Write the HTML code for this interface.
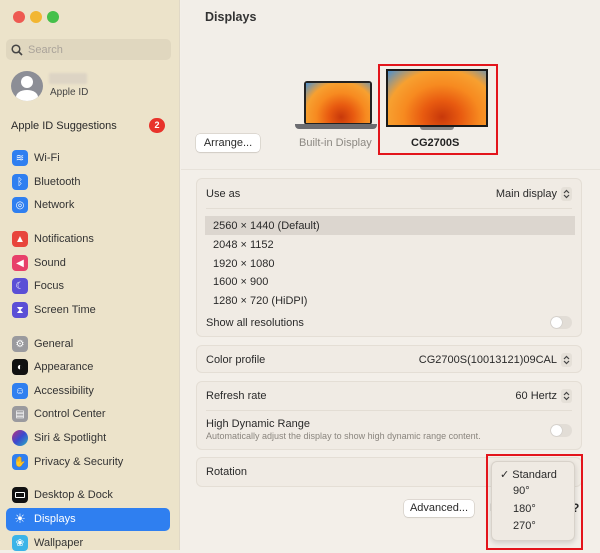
<!DOCTYPE html>
<html><head><meta charset="utf-8"><style>
*{margin:0;padding:0;box-sizing:border-box}
body{width:600px;height:550px;overflow:hidden;font-family:"Liberation Sans",sans-serif;font-size:11px;color:#2a2a2a;background:#f3efe9;position:relative}
.a{position:absolute}
#side{left:0;top:0;width:180px;height:550px;background:#ece3ca;border-right:1px solid #e0d8c6}
.dot{width:12px;height:12px;border-radius:50%;top:11px}
.it{position:absolute;left:12px;height:20px;display:flex;align-items:center;font-size:11px;color:#333}
.ic{width:16px;height:16px;border-radius:4px;margin-right:6px;flex:none;display:flex;align-items:center;justify-content:center;color:#fff;font-size:10px}
.panel{position:absolute;left:196px;width:386px;background:#f0ebe4;border:1px solid #e4ded5;border-radius:6px}
.row{position:absolute;left:9px;right:9px;display:flex;justify-content:space-between;align-items:center}
.sep{position:absolute;left:9px;right:9px;height:1px;background:#e3ddd4}
.tog{width:22px;height:13px;border-radius:7px;background:#e2ddd6;position:relative}
.tog:after{content:"";position:absolute;left:1px;top:1px;width:11px;height:11px;border-radius:50%;background:#fff;box-shadow:0 0 1px #999}
.st{display:inline-block;width:11px;height:14px;border-radius:3px;background:#e5e0d8;margin-left:4px;vertical-align:middle}
.wp{background:radial-gradient(ellipse at 55% 85%,#c8380a 0%,#e85a10 25%,#f78a20 50%,#f7a030 72%,#4a90d0 100%)}
.btn{position:absolute;background:#fff;border-radius:4px;box-shadow:0 0 0 .5px #c8c2ba,0 1px 1px rgba(0,0,0,.1);font-size:11px;text-align:center}
</style></head><body>
<div id="side" class="a">
 <div class="a dot" style="left:13px;background:#ee5a52"></div>
 <div class="a dot" style="left:30px;background:#f2b632"></div>
 <div class="a dot" style="left:47px;background:#45c04a"></div>
 <div class="a" style="left:6px;top:39px;width:165px;height:21px;border-radius:5px;background:#e0d7bf;color:#aaa39a;padding-left:22px;line-height:22px">Search</div>
 <svg class="a" style="left:11px;top:44px" width="12" height="12"><circle cx="5" cy="5" r="3.8" fill="none" stroke="#444" stroke-width="1.5"/><line x1="8" y1="8" x2="11" y2="11" stroke="#444" stroke-width="1.6"/></svg>
 <div class="a" style="left:11px;top:71px;width:32px;height:30px;border-radius:50%;background:#8c8e96;overflow:hidden"><div class="a" style="left:10px;top:5px;width:12px;height:12px;border-radius:50%;background:#fff"></div><div class="a" style="left:5px;top:19px;width:22px;height:14px;border-radius:50%;background:#fff"></div></div>
 <div class="a" style="left:49px;top:73px;width:38px;height:11px;background:#ddd4c4;border-radius:2px;filter:blur(1px)"></div>
 <div class="a" style="left:50px;top:87px;font-size:10px;color:#444">Apple ID</div>
 <div class="a" style="left:11px;top:120px;font-size:11px">Apple ID Suggestions</div>
 <div class="a" style="left:149px;top:118px;width:16px;height:15px;border-radius:8px;background:#e8332b;color:#fff;font-size:9px;font-weight:bold;text-align:center;line-height:15px">2</div>
 <div class="it" style="top:148px"><div class="ic" style="background:#2f7ff0">≋</div>Wi-Fi</div>
 <div class="it" style="top:172px"><div class="ic" style="background:#2f7ff0">ᛒ</div>Bluetooth</div>
 <div class="it" style="top:195px"><div class="ic" style="background:#2f7ff0">◎</div>Network</div>
 <div class="it" style="top:229px"><div class="ic" style="background:#e8453c">▲</div>Notifications</div>
 <div class="it" style="top:253px"><div class="ic" style="background:#e8406a">◀</div>Sound</div>
 <div class="it" style="top:276px"><div class="ic" style="background:#5b4fd6">☾</div>Focus</div>
 <div class="it" style="top:300px"><div class="ic" style="background:#5b4fd6">⧗</div>Screen Time</div>
 <div class="it" style="top:334px"><div class="ic" style="background:#9a9a9e">⚙</div>General</div>
 <div class="it" style="top:357px"><div class="ic" style="background:#111">◐</div>Appearance</div>
 <div class="it" style="top:381px"><div class="ic" style="background:#2f7ff0">☺</div>Accessibility</div>
 <div class="it" style="top:404px"><div class="ic" style="background:#9a9a9e">▤</div>Control Center</div>
 <div class="it" style="top:428px"><div class="ic" style="background:linear-gradient(135deg,#c0307a,#3a4ad0,#2ab0c0);border-radius:8px"></div>Siri &amp; Spotlight</div>
 <div class="it" style="top:452px"><div class="ic" style="background:#2f7ff0">✋</div>Privacy &amp; Security</div>
 <div class="it" style="top:485px"><div class="ic" style="background:#111"><div style="width:10px;height:6px;border:1.5px solid #fff;border-radius:1px"></div></div>Desktop &amp; Dock</div>
 <div class="a" style="left:6px;top:508px;width:164px;height:23px;border-radius:5px;background:#2f7ff0"></div>
 <div class="it" style="top:509px;color:#fff"><div class="ic" style="background:none;font-size:13px">☀</div>Displays</div>
 <div class="it" style="top:533px"><div class="ic" style="background:#3bb4e8">❀</div>Wallpaper</div>
</div>
<div class="a" style="left:181px;top:0;width:419px;height:170px;background:#f2eee8;border-bottom:1px solid #e7e2da"></div>
<div class="a" style="left:205px;top:10px;font-size:12.5px;font-weight:bold;color:#333">Displays</div>
<div class="a" style="left:304px;top:81px;width:68px;height:44px;background:#222;border-radius:3px;padding:2px"><div class="wp" style="width:100%;height:100%"></div></div>
<div class="a" style="left:295px;top:124px;width:82px;height:5px;background:#6c6c70;border-radius:0 0 4px 4px"></div>
<div class="a" style="left:386px;top:69px;width:102px;height:58px;background:#1a1a1a;padding:2px"><div class="wp" style="width:100%;height:100%"></div></div>
<div class="a" style="left:420px;top:127px;width:34px;height:3px;background:#888;border-radius:0 0 4px 4px"></div>
<div class="a" style="left:378px;top:64px;width:120px;height:91px;border:2px solid #e3141b"></div>
<div class="btn" style="left:196px;top:134px;width:64px;height:18px;line-height:18px">Arrange...</div>
<div class="a" style="left:299px;top:137px;color:#8c8882">Built-in Display</div>
<div class="a" style="left:411px;top:137px;font-weight:bold;color:#222">CG2700S</div>

<div class="panel" style="top:178px;height:159px">
 <div class="row" style="top:8px">Use as<span>Main display<svg class="st" viewBox="0 0 11 14"><path d="M3 6l2.5-2.5L8 6M3 8l2.5 2.5L8 8" fill="none" stroke="#444" stroke-width="1.2"/></svg></span></div>
 <div class="sep" style="top:29px"></div>
 <div class="a" style="left:8px;top:37px;width:370px;height:19px;background:#dcd6cf"></div>
 <div class="a" style="left:16px;top:41px">2560 × 1440 (Default)</div>
 <div class="a" style="left:16px;top:60px">2048 × 1152</div>
 <div class="a" style="left:16px;top:79px">1920 × 1080</div>
 <div class="a" style="left:16px;top:97px">1600 × 900</div>
 <div class="a" style="left:16px;top:116px">1280 × 720 (HiDPI)</div>
 <div class="row" style="top:137px">Show all resolutions<div class="tog"></div></div>
</div>
<div class="panel" style="top:345px;height:28px">
 <div class="row" style="top:7px">Color profile<span>CG2700S(10013121)09CAL<svg class="st" viewBox="0 0 11 14"><path d="M3 6l2.5-2.5L8 6M3 8l2.5 2.5L8 8" fill="none" stroke="#444" stroke-width="1.2"/></svg></span></div>
</div>
<div class="panel" style="top:381px;height:69px">
 <div class="row" style="top:7px">Refresh rate<span>60 Hertz<svg class="st" viewBox="0 0 11 14"><path d="M3 6l2.5-2.5L8 6M3 8l2.5 2.5L8 8" fill="none" stroke="#444" stroke-width="1.2"/></svg></span></div>
 <div class="sep" style="top:28px"></div>
 <div class="row" style="top:36px"><span>High Dynamic Range<br><span style="font-size:9px;color:#8a857e">Automatically adjust the display to show high dynamic range content.</span></span><div class="tog"></div></div>
</div>
<div class="panel" style="top:457px;height:30px">
 <div class="a" style="left:9px;top:8px">Rotation</div>
</div>
<div class="btn" style="left:404px;top:500px;width:70px;height:17px;line-height:17px">Advanced...</div>
<div class="a" style="left:490px;top:502px">N</div>
<div class="a" style="left:572px;top:501px;font-size:12px;font-weight:bold">?</div>
<div class="a" style="left:491px;top:461px;width:84px;height:80px;background:#efeae3;border:1px solid #d8d2ca;border-radius:6px;box-shadow:0 2px 6px rgba(0,0,0,.15)">
 <div class="a" style="left:8px;top:6px">✓ Standard</div>
 <div class="a" style="left:21px;top:23px">90°</div>
 <div class="a" style="left:21px;top:41px">180°</div>
 <div class="a" style="left:21px;top:58px">270°</div>
</div>
<div class="a" style="left:486px;top:454px;width:97px;height:96px;border:2px solid #e3141b"></div>
</body></html>
